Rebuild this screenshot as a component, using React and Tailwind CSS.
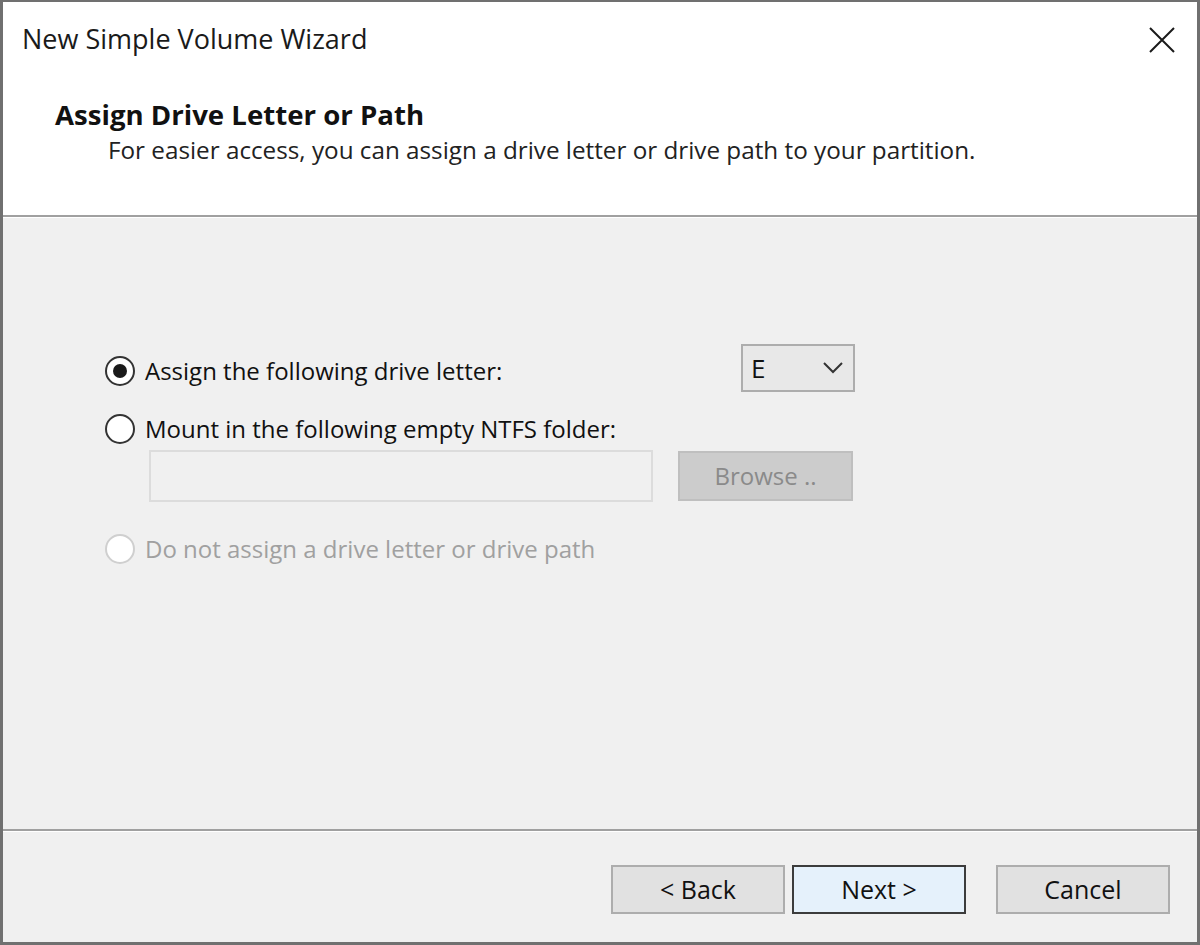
import React from 'react';

// New Simple Volume Wizard — drive letter step

function Radio({ checked, disabled }) {
  return (
    <div className={`w-[30px] h-[30px] rounded-full border-2 bg-white flex items-center justify-center shrink-0 ${disabled ? 'border-[#cfcfcf]' : 'border-[#333333]'}`}>
      {checked && <div className="w-[14px] h-[14px] rounded-full bg-[#1a1a1a]" />}
    </div>
  );
}

function Button({ children, primary }) {
  return (
    <button className={`w-[174px] h-[49px] text-[25px] text-[#111] ${primary ? 'border-2 border-[#3c3c3c] bg-[#e5f1fb]' : 'border-2 border-[#adadad] bg-[#e1e1e1]'}`}>
      {children}
    </button>
  );
}

export default function App() {
  return (
    <div className="w-[1200px] h-[945px] flex flex-col border-t-2 border-l-[3px] border-r-[3px] border-b-[3px] border-[#707070] bg-[#f0f0f0] text-[#111]" style={{ fontFamily: '"Open Sans", "Noto Sans", Arial, sans-serif' }}>
      {/* Header */}
      <div className="bg-white h-[213px] shrink-0">
        <div className="flex items-center justify-between pl-[19px] pr-[22px] pt-[17px]">
          <span className="text-[27px] leading-[40px] text-[#1a1a1a]">New Simple Volume Wizard</span>
          <svg width="26" height="26" viewBox="0 0 26 26" className="mt-[2px]">
            <path d="M1 1 L25 25 M25 1 L1 25" stroke="#1a1a1a" strokeWidth="2" fill="none" />
          </svg>
        </div>
        <div className="pl-[52px] pt-[37px]">
          <div className="text-[27.6px] font-bold leading-[36px]">Assign Drive Letter or Path</div>
          <div className="pl-[53px] text-[24.25px] leading-[36px] text-[#222]">For easier access, you can assign a drive letter or drive path to your partition.</div>
        </div>
      </div>
      <div className="h-[2px] bg-[#a0a0a0] shrink-0" />
      <div className="h-[1px] bg-white shrink-0" />

      {/* Body */}
      <div className="flex-1 pl-[102px] pt-[126px]">
        <div className="flex items-center h-[48px]">
          <div className="w-[636px] flex items-center gap-[10px] mt-[6px]">
            <Radio checked />
            <span className="text-[24px]">Assign the following drive letter:</span>
          </div>
          <div className="w-[114px] h-[48px] border-2 border-[#adadad] bg-[#e8e8e8] flex items-center justify-between pl-[8px] pr-[10px]">
            <span className="text-[26px]">E</span>
            <svg width="20" height="12" viewBox="0 0 20 12">
              <path d="M1 1 L10 10 L19 1" stroke="#333" strokeWidth="2" fill="none" />
            </svg>
          </div>
        </div>
        <div className="flex items-center gap-[10px] h-[30px] mt-[22px]">
          <Radio />
          <span className="text-[24px]">Mount in the following empty NTFS folder:</span>
        </div>
        <div className="flex items-center gap-[25px] mt-[6px] pl-[44px]">
          <div className="w-[504px] h-[52px] border-2 border-[#dcdcdc] bg-[#f0f0f0]" />
          <div className="w-[175px] h-[50px] border-2 border-[#bfbfbf] bg-[#cccccc] flex items-center justify-center text-[24px] text-[#8a8a8a]">Browse ..</div>
        </div>
        <div className="flex items-center gap-[10px] h-[30px] mt-[32px]">
          <Radio disabled />
          <span className="text-[24px] text-[#a0a0a0]">Do not assign a drive letter or drive path</span>
        </div>
      </div>

      {/* Footer */}
      <div className="h-[2px] bg-[#a0a0a0] shrink-0" />
      <div className="h-[1px] bg-white shrink-0" />
      <div className="h-[110px] shrink-0 flex justify-end pr-[27px] pt-[33px]">
        <div className="flex gap-[7px]">
          <Button>&lt; Back</Button>
          <Button primary>Next &gt;</Button>
        </div>
        <div className="ml-[30px]">
          <Button>Cancel</Button>
        </div>
      </div>
    </div>
  );
}
